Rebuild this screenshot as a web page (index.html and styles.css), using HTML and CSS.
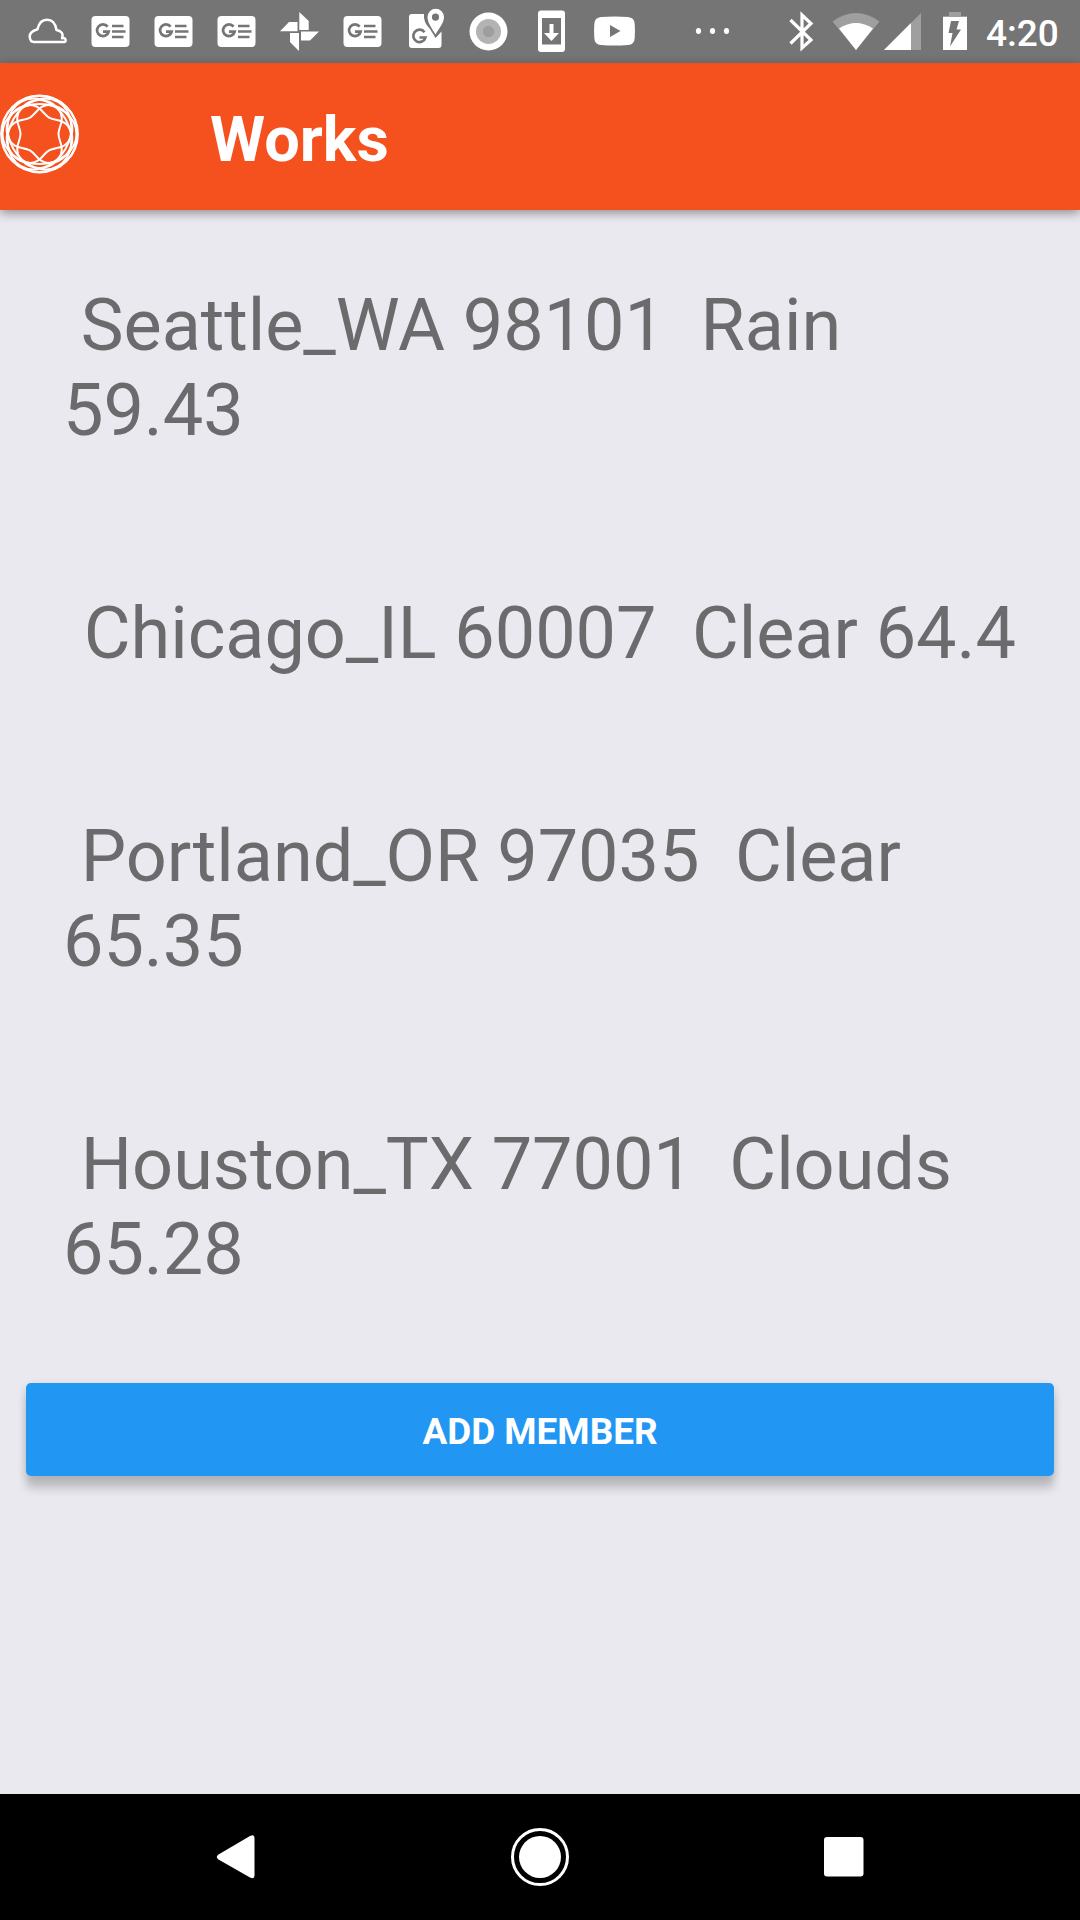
FILE: index.html
```html
<!DOCTYPE html>
<html lang="en">
<head>
<meta charset="utf-8">
<meta name="viewport" content="width=device-width">
<title>Works</title>
<link rel="stylesheet" href="styles.css">
</head>
<body>
<div class="screen">
  <header class="status">
    <svg width="0" height="0" class="defs">
      <defs>
        <g id="news">
          <rect x="12.5" y="16" width="38" height="31" rx="4" fill="#fff"/>
          <path d="M28.6 26.6A5.9 5.9 0 1 0 29.7 31.6H24" fill="none" stroke="#757575" stroke-width="2.7"/>
          <path d="M33 26h11.500M33 31.500h13.500M33 37h11.500" stroke="#757575" stroke-width="2.700"/>
        </g>
        <path id="facet" d="M19 0C19 -4 21 -8 22 -12C24 -23 14 -34 0 -34S-24 -23 -22 -12C-21 -8 -19 -4 -19 0S-21 8 -22 12C-24 23 -14 34 0 34S24 23 22 12C21 8 19 4 19 0Z"/>
        <ellipse id="ring" rx="37" ry="30"/>
      </defs>
    </svg>
    <div class="notifications">
      <svg viewBox="16 0 63 63"><path d="M34 42H64.500Q66 42 65.500 39.500Q65 37.500 62 38.300Q64.500 31.500 56.500 30Q55 19.700 47 19.700Q39.500 19.700 37.500 29.200Q29.600 31.500 29.700 36.500Q30 42 34 42Z" fill="none" stroke="#fff" stroke-width="2.500" stroke-linejoin="round"/></svg>
      <svg viewBox="0 0 63 63"><use href="#news"/></svg>
      <svg viewBox="0 0 63 63"><use href="#news"/></svg>
      <svg viewBox="0 0 63 63"><use href="#news"/></svg>
      <svg viewBox="268 0 63 63" fill="#fff"><path d="M299.300 12L308.700 21V30H299.300ZM319 31.500L310 40.500H301V31.500ZM299 51L290 42V33H299ZM280 31.300L289 22H297.500V31.300Z"/></svg>
      <svg viewBox="0 0 63 63"><use href="#news"/></svg>
      <svg viewBox="394 0 63 63"><path d="M412 14H424Q423 22 430 29L435.500 38L441.500 31.500V45Q441.500 48 438.500 48H412Q409 48 409 45V17Q409 14 412 14Z" fill="#fff"/><path d="M424.500 32.200A6.200 6.200 0 1 0 425.500 37.500H419.500" fill="none" stroke="#757575" stroke-width="2.700"/><path d="M435.500 34.500C431 27 427.500 22.500 427.500 17A8.200 8.200 0 0 1 444 17C444 22.500 440 27 435.500 34.500ZM435.500 13.500A3.600 3.600 0 1 0 435.500 20.700A3.600 3.600 0 1 0 435.500 13.500Z" fill="#fff" fill-rule="evenodd"/></svg>
      <svg viewBox="457 0 63 63"><circle cx="488.500" cy="31.500" r="19" fill="#fff"/><circle cx="488.500" cy="31.500" r="12.500" fill="#b3b3b3"/><circle cx="488.500" cy="31.500" r="5.700" fill="#9e9e9e"/></svg>
      <svg viewBox="520 0 63 63"><path d="M541 10.500H562Q565 10.500 565 13.500V49Q565 52 562 52H541Q538 52 538 49V13.500Q538 10.500 541 10.500ZM542 18V44.500H561V18Z" fill="#fff" fill-rule="evenodd"/><path d="M549.500 24H553.500V33H559L551.500 41L544 33H549.500Z" fill="#fff"/></svg>
      <svg viewBox="583 0 63 63"><path d="M601 17Q614.500 16 628 17Q634.500 17.500 634.700 24Q635.200 31 634.700 38Q634.500 44.500 628 45Q614.500 46 601 45Q594.500 44.500 594.300 38Q593.800 31 594.300 24Q594.500 17.500 601 17Z" fill="#fff"/><path d="M610 25V37L620.500 31Z" fill="#757575"/></svg>
    </div>
    <svg class="more" viewBox="690 0 45 63" fill="#fff"><ellipse cx="698.500" cy="31" rx="2.600" ry="3"/><ellipse cx="712.500" cy="31" rx="2.600" ry="3"/><ellipse cx="726.500" cy="31" rx="2.600" ry="3"/></svg>
    <svg class="system" viewBox="785 0 190 63">
      <path d="M790.500 20L811 40L802 48V15L811 23.500L790.500 43.500" fill="none" stroke="#fff" stroke-width="3.200"/>
      <path d="M832.500 21.500Q856 4.500 879.500 21.500L856 50Z" fill="#9f9f9f"/>
      <path d="M839 28.500Q856 17.500 873 28.500L856 50Z" fill="#fff"/>
      <path d="M921 13V50H884Z" fill="#9f9f9f"/>
      <path d="M911 23V50H884Z" fill="#fff"/>
      <path d="M949 12H961V16H967V20H943V16H949Z" fill="#9f9f9f"/>
      <path d="M943 17H967V50H943Z" fill="#fff"/>
      <path d="M951 21H959L956.500 29.500H961L950 46.500L952.500 33H948.500Z" fill="#757575"/>
    </svg>
    <time class="clock">4:20</time>
  </header>
  <div class="appbar">
    <svg class="logo" viewBox="-39.500 -40 80 80" fill="none" stroke="#fff" stroke-width="2">
      <circle r="38.200" stroke-width="2.400"/>
      <use href="#ring"/>
      <use href="#ring" transform="rotate(60)"/>
      <use href="#ring" transform="rotate(120)"/>
      <use href="#facet"/>
      <use href="#facet" transform="rotate(60)"/>
      <use href="#facet" transform="rotate(120)"/>
    </svg>
    <h1 class="title">Works</h1>
  </div>
  <main class="content">
    <ul class="cities">
      <li class="city"> Seattle_WA 98101  Rain 
59.43</li>
      <li class="city city-single"> Chicago_IL 60007  Clear 64.4</li>
      <li class="city"> Portland_OR 97035  Clear 
65.35</li>
      <li class="city"> Houston_TX 77001  Clouds 
65.28</li>
    </ul>
    <button class="add" type="button">ADD MEMBER</button>
  </main>
  <nav class="navbar">
    <svg viewBox="0 0 64 64"><path d="M14.500 29.500L46 11Q50.500 9 50.500 13V50.500Q50.500 54.500 46 52.500L14.500 34.500Q11 32 14.500 29.500Z" fill="#fff"/></svg>
    <svg viewBox="0 0 64 64"><circle cx="32" cy="32" r="27.500" fill="none" stroke="#fff" stroke-width="3"/><circle cx="32" cy="32" r="21" fill="#fff"/></svg>
    <svg viewBox="0 0 64 64"><rect x="12" y="12" width="39.500" height="39.500" rx="3" fill="#fff"/></svg>
  </nav>
</div>
</body>
</html>
```
FILE: styles.css
```css
* { box-sizing: border-box; }
body { margin: 0; font-family: Roboto, "Liberation Sans", sans-serif; }
svg { display: block; flex: none; }
.screen { width: 1080px; height: 1920px; display: flex; flex-direction: column; background: #e9e9ef; overflow: hidden; }
.status { flex: none; height: 63px; display: flex; padding-left: 16px; background: #757575; color: #fff; }
.defs { width: 0; height: 0; }
.notifications { display: flex; width: 630px; }
.notifications svg { width: 63px; height: 63px; }
.more { width: 45px; height: 63px; margin-left: 44px; }
.system { width: 190px; height: 63px; margin-left: 50px; }
.clock { margin-left: 11px; font-size: 37px; font-weight: 500; line-height: 67px; }
.appbar { flex: none; height: 147px; display: flex; align-items: center; background: #f4511e; box-shadow: 0 3px 10px rgba(0,0,0,.4); }
.logo { width: 80px; height: 80px; margin-top: -6px; }
.title { margin: 7px 0 0 130px; font-size: 63px; font-weight: 700; line-height: 74px; color: #fff; }
.content { flex: 1; padding: 73px 26px 0; }
.cities { list-style: none; margin: 0; padding: 0 0 0 37px; }
.city { margin-bottom: 138px; font-size: 72px; line-height: 85px; letter-spacing: -.05px; white-space: pre; color: #6b6b6d; }
.city-single { padding-left: 3px; }
.city:last-child { margin-bottom: 91px; }
.add { display: block; width: 100%; height: 93px; padding: 5px 0 0; border: 0; border-radius: 5px; background: #2196f3; color: #fff; font: 700 36.9px/1 Roboto, "Liberation Sans", sans-serif; box-shadow: 0 13px 8px rgba(0,0,0,.17), 0 3px 10px rgba(0,0,0,.12); }
.navbar { flex: none; height: 126px; display: flex; align-items: center; justify-content: space-between; padding: 0 204px; background: #000; }
.navbar svg { width: 64px; height: 64px; }
```
